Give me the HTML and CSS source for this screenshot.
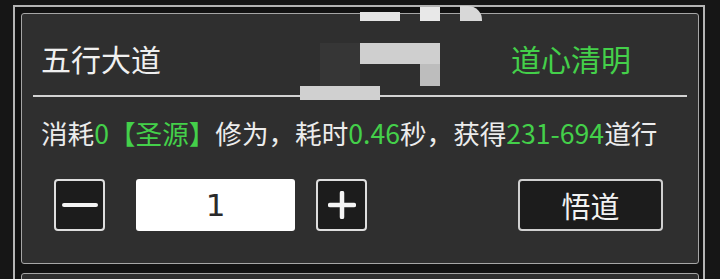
FILE: index.html
```html
<!DOCTYPE html>
<html lang="zh">
<head>
    <meta charset="UTF-8">
    <meta name="viewport" content="width=device-width, initial-scale=1.0">
    <title>五行大道</title>
    <link rel="stylesheet" href="styles.css">
</head>
<body>
    <div class="frame">
        <div class="card">
            <div class="card-head">
                <span class="title">五行大道</span>
                <span class="state">道心清明</span>
            </div>
            <div class="divider"></div>
            <p class="info">消耗<em>0【圣源】</em>修为，耗时<em>0.46</em>秒，获得<em>231-694</em>道行</p>
            <div class="controls">
                <div class="stepper">
                    <button class="step-button" aria-label="减少">
                        <svg width="36" height="6" viewBox="0 0 36 6"><line x1="2" y1="3" x2="34" y2="3" stroke="#f4f4f4" stroke-width="4" stroke-linecap="round"/></svg>
                    </button>
                    <input class="count" type="text" value="1">
                    <button class="step-button plus" aria-label="增加">
                        <svg width="28" height="28" viewBox="0 0 28 28"><line x1="2" y1="14" x2="26" y2="14" stroke="#f4f4f4" stroke-width="4.5" stroke-linecap="round"/><line x1="14" y1="2" x2="14" y2="26" stroke="#f4f4f4" stroke-width="4.5" stroke-linecap="round"/></svg>
                    </button>
                </div>
                <button class="go-button">悟道</button>
            </div>
        </div>
        <div class="card next"></div>
    </div>

    <!-- mosaic over the hidden name -->
    <div class="mosaic">
        <span class="m1"></span>
        <span class="m2"></span>
        <span class="m3"></span>
        <span class="m4"></span>
        <span class="m5"></span>
        <span class="m6"></span>
        <span class="m7"></span>
    </div>
</body>
</html>
```

FILE: styles.css
```css
body {
    margin: 0;
    padding: 0;
    width: 720px;
    height: 279px;
    overflow: hidden;
    position: relative;
    background-color: #161616;
    font-family: "Noto Sans CJK SC", "Noto Sans", sans-serif;
    color: #ececec;
}
.frame {
    margin: 5px 0 0 13px;
    width: 692px;
    height: 274px;
    overflow: hidden;
    border: 2px solid #b4b4b4;
    border-bottom: none;
    background: #121212;
    padding: 6px 4px 0 6px;
    box-sizing: border-box;
}
.card {
    width: 678px;
    box-sizing: border-box;
    border: 1px solid #a6a6a6;
    border-radius: 3px;
    background: #2f2f2f;
    padding-bottom: 32px;
}
.card.next {
    margin-top: 9px;
    height: 40px;
}
.card-head {
    height: 81px;
    padding: 6px 67px 0 19px;
    box-sizing: border-box;
    display: flex;
    align-items: center;
    justify-content: space-between;
    font-size: 30px;
}
.title {
    color: #f0f0f0;
}
.state {
    color: #44d04a;
}
.divider {
    height: 2px;
    margin: 0 11px;
    background: #d2d2d2;
}
.info {
    margin: 18px 0 0 19px;
    font-size: 26.6px;
    line-height: 36px;
    white-space: nowrap;
}
.info em {
    font-style: normal;
    color: #44d04a;
}
.controls {
    margin-top: 28px;
    padding: 0 35px 0 32px;
    display: flex;
    align-items: center;
    justify-content: space-between;
}
.stepper {
    display: flex;
    align-items: center;
}
.step-button {
    width: 51px;
    height: 52px;
    padding: 0;
    border: 2px solid #dedede;
    border-radius: 4px;
    background: #1c1c1c;
    display: flex;
    align-items: center;
    justify-content: center;
    cursor: pointer;
}
.step-button.plus {
    margin-left: 21px;
}
.count {
    margin-left: 31px;
    width: 159px;
    height: 52px;
    box-sizing: border-box;
    border: none;
    border-radius: 3px;
    background: #ffffff;
    text-align: center;
    font-family: "DejaVu Sans", sans-serif;
    font-size: 31px;
    color: #2a2a2a;
    padding: 0;
}
.go-button {
    width: 145px;
    height: 52px;
    border: 2px solid #d0d0d0;
    border-radius: 4px;
    background: #1c1c1c;
    color: #f2f2f2;
    font-family: "Noto Sans CJK SC", sans-serif;
    font-size: 29px;
    padding: 0;
    cursor: pointer;
}
.mosaic span {
    position: absolute;
    display: block;
}
.m1 { left: 360px; top: 12px; width: 40px; height: 9px; background: #e4e4e4; }
.m2 { left: 420px; top: 7px; width: 20px; height: 14px; background: #e8e8e8; }
.m3 { left: 460px; top: 6px; width: 22px; height: 15px; background: #d8d8d8; border-top-right-radius: 14px; }
.m4 { left: 320px; top: 43px; width: 40px; height: 43px; background: #363636; }
.m5 { left: 360px; top: 43px; width: 80px; height: 21px; background: #cfcfcf; }
.m6 { left: 420px; top: 64px; width: 20px; height: 22px; background: #bdbdbd; }
.m7 { left: 300px; top: 86px; width: 80px; height: 14px; background: #d0d0d0; }
```
